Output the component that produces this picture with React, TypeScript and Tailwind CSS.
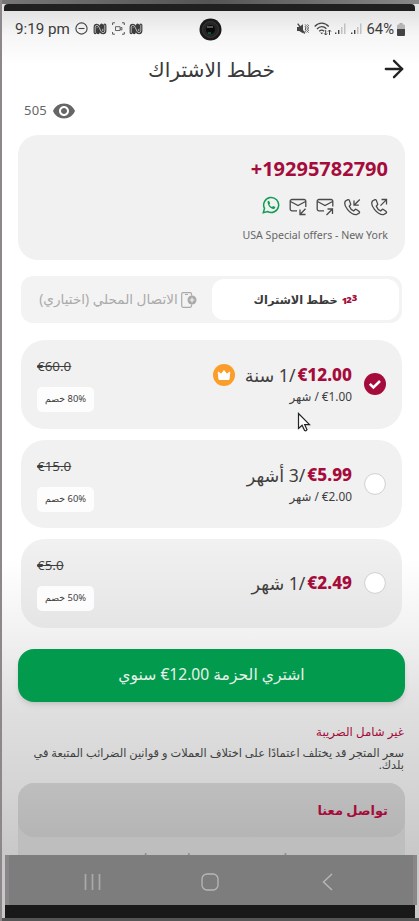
import { FiArrowRight } from 'react-icons/fi'
import { MdRemoveRedEye } from 'react-icons/md'

const plans = [
  { price: '€12.00', period: '/1 سنة', monthly: '€1.00', old: '€60.0', off: '80% خصم', selected: true },
  { price: '€5.99', period: '/3 أشهر', monthly: '€2.00', old: '€15.0', off: '60% خصم', selected: false },
  { price: '€2.49', period: '/1 شهر', monthly: '', old: '€5.0', off: '50% خصم', selected: false },
]

const NIcon = () => (
  <svg width="14" height="12" viewBox="0 0 14 12" fill="none" strokeLinecap="round" strokeLinejoin="round">
    <path d="M2.2 9.6V4.2q0-1.8 1.6-1.8t2.2 1.7l1.9 4q.6 1.5 2.2 1.5t1.7-1.8V2.2M5.2 9.6V6M8.6 2.2v3" stroke="#3c3c3c" strokeWidth="3.2" />
    <path d="M2.2 9.6V4.2q0-1.8 1.6-1.8t2.2 1.7l1.9 4q.6 1.5 2.2 1.5t1.7-1.8V2.2" stroke="#ececec" strokeWidth=".7" />
  </svg>
)

const Signal = () => (
  <svg width="12" height="12" viewBox="0 0 12 12">
    <path d="M0 9.5h1.4V11H0zM3 7h1.4v4H3z" fill="#444" />
    <path d="M6 4h1.5v7H6zM9 0.5h1.5V11H9z" fill="#c2c2c2" />
  </svg>
)

const StatusBar = () => (
  <div className="flex h-[36px] shrink-0 items-center pl-[15px] pr-[14px] font-['Roboto',sans-serif] text-[#3c3c3c]">
    <div className="flex w-[184px] items-center">
      <span className="w-[60px] whitespace-nowrap text-[15.2px]">9:19 pm</span>
      <svg width="13" height="13" viewBox="0 0 13 13" fill="none" stroke="#444" strokeWidth="1.1">
        <circle cx="6.5" cy="6.5" r="5.6" />
        <path d="M3.5 6.5h6" />
      </svg>
      <span className="ml-[5px]"><NIcon /></span>
      <svg className="ml-[5px]" width="13" height="13" viewBox="0 0 13 13" fill="none" stroke="#555">
        <path d="M.6 3V.8h2.3M10 .8h2.3V3M.6 10v2.2h2.3M10 12.2h2.3V10" />
        <path d="M3.5 4.7h4.6v3.8H3.5zM8.1 6.3l1.8-1v2.8l-1.8-1" strokeWidth=".9" />
      </svg>
      <span className="ml-[4px]"><NIcon /></span>
    </div>
    <svg width="23" height="23" viewBox="0 0 23 23">
      <circle cx="11.5" cy="11.5" r="11" fill="#191919" />
      <circle cx="11.5" cy="11.5" r="8" fill="#252525" stroke="#393939" />
      <circle cx="11.5" cy="11.5" r="4.5" fill="#090909" />
      <path d="M8 9h6" stroke="#777" strokeWidth="1.4" />
      <path d="M9 15h3" stroke="#16795b" strokeWidth="1.2" />
    </svg>
    <div className="ml-auto flex items-center">
      <svg width="12" height="12" viewBox="0 0 12 12" fill="none" stroke="#444">
        <path d="M0 4h2.2L6 1.2v9L2.2 8H0z" fill="#444" stroke="none" />
        <path d="m.7.7 7 9.8" stroke="#444" strokeWidth="1.3" />
        <path d="m8.2 1.5 1 1-1 1.2 1 1.2-1 1.2 1 1.2-1 1.2 1 1M10.5 1.5l1 1-1 1.2 1 1.2-1 1.2 1 1.2-1 1.2 1 1" />
      </svg>
      <svg className="ml-[5px]" width="18" height="14" viewBox="0 0 18 14" fill="none" stroke="#444" strokeWidth="1.3">
        <path d="M.7 4.5c4-4.4 10-4.4 14 0M3 7c2.9-3 6.6-3 9.4-.2M5.2 9.3c1.6-1.5 3.5-1.5 5 0" />
        <path d="m6.2 10.5 1.5 1.7 1.5-1.5z" fill="#444" stroke="none" />
        <path d="M11.7 8v5m-1.5-1.6 1.5 1.6 1.4-1.6M15.5 13V8M14 9.6 15.5 8 17 9.6" strokeWidth="1" />
      </svg>
      <span className="ml-[3px]"><Signal /></span>
      <span className="ml-[4px]"><Signal /></span>
      <span className="ml-[4px] text-[14.8px]">64%</span>
      <svg className="ml-[3px]" width="8" height="13" viewBox="0 0 8 13">
        <rect x="2.3" width="3.5" height="3" rx="1" fill="#aaa" />
        <rect y="1.4" width="8" height="11.5" rx="1.2" fill="#b5b5b5" />
        <path d="M0 6h8v5.7q0 1.2-1.2 1.2H1.2Q0 12.9 0 11.7z" fill="#444" />
      </svg>
    </div>
  </div>
)

const Channels = () => (
  <div className="flex h-[20px] items-center gap-[9px]">
    <svg width="18" height="18" viewBox="0 0 18 18" fill="none" stroke="#119d55" strokeWidth="1.5" className="mb-[5px]">
      <path d="M1.3 16.7 2.5 12.4A7.5 7.5 0 1 1 5.5 15.5z" />
      <path d="M5.6 5.2 7 4.7l1.2 2.5-.8 1.2c.6 1.2 1.4 2 2.6 2.5l1.2-1 2.2 1.2c-.1 1.5-1.3 2-2.5 1.8C8 12.2 5.2 8.8 5.6 5.2z" fill="#119d55" stroke="none" />
    </svg>
    <svg width="18" height="18" viewBox="0 0 18 18" fill="none" stroke="#4a4a4a" strokeWidth="1.3">
      <path d="M8 12.8H3A1.7 1.7 0 0 1 1.2 11.1V3.2A1.7 1.7 0 0 1 3 1.5h12a1.7 1.7 0 0 1 1.8 1.7V9M1.5 3.5 9 7.6l7.5-4.1M16.5 10.7 11 16.5M11 11.5v5h5.5" />
    </svg>
    <svg width="18" height="18" viewBox="0 0 18 18" fill="none" stroke="#4a4a4a" strokeWidth="1.3">
      <path d="M8 12.8H3A1.7 1.7 0 0 1 1.2 11.1V3.2A1.7 1.7 0 0 1 3 1.5h12a1.7 1.7 0 0 1 1.8 1.7v5.3M1.5 3.5 9 7.6l7.5-4.1M10.5 17l6-6M11.5 11h5v5" />
    </svg>
    <svg width="18" height="18" viewBox="0 0 18 18" fill="none" stroke="#4a4a4a" strokeWidth="1.3">
      <path d="M5 1.7 2.5 3C-.4 7 7 17 13.4 16.7l2.7-1.6q.8-.7.1-1.5l-2.8-2.1q-.8-.5-1.5.2l-1.2 1.2c-2-.8-3.6-2.5-4.4-4.7l1-1.2q.6-.6.2-1.4L6.3 2.2Q5.8 1.3 5 1.7zM16.8 1.5 11 7.2M11 2.5v4.7h4.8" />
    </svg>
    <svg width="18" height="18" viewBox="0 0 18 18" fill="none" stroke="#4a4a4a" strokeWidth="1.3">
      <path d="M5 1.7 2.5 3C-.4 7 7 17 13.4 16.7l2.7-1.6q.8-.7.1-1.5l-2.8-2.1q-.8-.5-1.5.2l-1.2 1.2c-2-.8-3.6-2.5-4.4-4.7l1-1.2q.6-.6.2-1.4L6.3 2.2Q5.8 1.3 5 1.7zM10.5 7.6l6-6M11.5 1.5h5v5" />
    </svg>
  </div>
)

const Tabs = () => (
  <div className="ml-[21px] mr-[17px] mt-4 flex h-[47px] shrink-0 items-center rounded-[12px] bg-[#f3f3f3] p-[3px]">
    <div className="flex h-full w-[188px] items-center justify-center gap-[3px] text-[#aaa]">
      <span dir="rtl" className="whitespace-nowrap text-[13.6px]">الاتصال المحلي (اختياري)</span>
      <svg width="16" height="16" viewBox="0 0 16 16" fill="none" stroke="#aaa" strokeWidth="1.2">
        <path d="M10.5 3.5V2A1.4 1.4 0 0 0 9.2.7H2A1.4 1.4 0 0 0 .7 2v12A1.4 1.4 0 0 0 2 15.3h7.2a1.4 1.4 0 0 0 1.3-1.3v-1.5M4 2.5h3" />
        <circle cx="11" cy="8" r="4.5" fill="#aaa" stroke="none" />
        <path d="M11 5.7v4.6M8.7 8h4.6" stroke="#f3f3f3" />
      </svg>
    </div>
    <div className="flex h-[41px] flex-1 items-center justify-center gap-[4px] rounded-[12px] bg-white">
      <span dir="rtl" className="whitespace-nowrap text-[11.4px] font-bold text-[#3a3a3a]">خطط الاشتراك</span>
      <span className="flex text-[9.5px] font-black leading-none text-[#a50c3b]">
        <span className="mt-[2px] -mr-[1px]">1</span>
        <span className="mt-[1px]">2</span>
        <span className="-mt-[1px]">3</span>
      </span>
    </div>
  </div>
)

const PlanCard = ({ plan, className }: { plan: (typeof plans)[number]; className: string }) => (
  <div className={`ml-[21px] mr-[17px] flex h-[88.5px] shrink-0 justify-between rounded-[24px] pl-4 pr-[16px] text-[#3f3f3f] ${className}`}>
    <div className="flex flex-col items-start pt-[17px]">
      <span className="h-[18px] text-[13.4px] leading-[18px] line-through">{plan.old}</span>
      <span dir="rtl" className="mt-[12px] flex h-[25px] w-[57px] items-center justify-center whitespace-nowrap rounded-[5px] bg-white/85 text-[9.4px]">
        {plan.off}
      </span>
    </div>
    <div className="flex items-center gap-[12px]">
      <div className="flex flex-col items-end pb-px">
        <div className="flex h-[26px] items-center">
          {plan.selected && (
            <svg className="mr-[10px]" width="22" height="22" viewBox="0 0 22 22">
              <circle cx="11" cy="11" r="11" fill="#fb9d2b" />
              <path d="m5.2 8 3 2.2L11 6.5l2.8 3.7 3-2.2-.8 7.5H6z" fill="#fff" stroke="#fff" strokeLinejoin="round" />
            </svg>
          )}
          <span dir="rtl" className="whitespace-nowrap text-[17.6px]">{plan.period}</span>
          <span className="ml-[2px] text-[17.2px] font-extrabold text-[#a50c3b]">{plan.price}</span>
        </div>
        {plan.monthly && (
          <span dir="rtl" className="h-[17px] whitespace-nowrap text-[11.8px] leading-[17px]">
            <bdi dir="ltr">{plan.monthly}</bdi> / شهر
          </span>
        )}
      </div>
      <svg width="22" height="22" viewBox="0 0 22 22" fill="none">
        <circle cx="11" cy="11" r={plan.selected ? 11 : 10.4} fill={plan.selected ? '#a50c3b' : '#fff'} stroke={plan.selected ? 'none' : '#d0d0d0'} />
        {plan.selected && <path d="m5.8 10.8 3.6 3.6 6.6-6.4" stroke="#fff" strokeWidth="2.6" />}
      </svg>
    </div>
  </div>
)

const NavBar = () => (
  <div className="mr-[2px] ml-[5px] flex h-[50px] shrink-0 items-center border-x-[4px] border-[#898589] bg-[#7d7d7d]">
    <svg className="ml-[74px] mt-1" width="20" height="18" viewBox="0 0 20 18" stroke="#aaa" strokeWidth="1.7">
      <path d="M2.5 1v16M9.5 1v16M16.5 1v16" />
    </svg>
    <svg className="ml-[98px] mt-1" width="18" height="18" viewBox="0 0 18 18" fill="none" stroke="#b8b8b8" strokeWidth="1.3">
      <rect x="1" y="1" width="16" height="16" rx="5" />
    </svg>
    <svg className="ml-[103px] mt-1" width="12" height="18" viewBox="0 0 12 18" fill="none" stroke="#b8b8b8" strokeWidth="1.4">
      <path d="m10 1-8.5 8 8.5 8" />
    </svg>
  </div>
)

export default function App() {
  return (
    <div className="relative flex h-[921px] w-[419px] flex-col overflow-hidden bg-[linear-gradient(180deg,#e3e3e3_0,#e3e3e3_11px,#f6f6f6_35px,#fff_65px,#fff_560px,#f1f1f1_635px,#dfdfdf_710px,#d4d4d4_790px,#c8c8c8_855px)] font-['Noto_Sans','DejaVu_Sans',sans-serif]">
      <div className="h-[4px] shrink-0 bg-gradient-to-r from-[#777] via-[#555] to-[#888]" />
      <div className="mx-[4px] h-[7px] shrink-0 rounded-t bg-[#202020]" />
      <StatusBar />
      <header className="flex h-[44px] shrink-0 items-center pr-[11px]">
        <h1 dir="rtl" className="ml-[148px] w-[127px] whitespace-nowrap text-[20.2px] text-[#3a3a3a]">خطط الاشتراك</h1>
        <FiArrowRight className="ml-auto h-[28px] w-[28px] text-[#222]" />
      </header>
      <div className="flex h-[44px] shrink-0 items-center gap-[5px] pb-[5px] pl-[24px] text-[13px] text-[#666]">
        <span className="tracking-[0.2px]">505</span>
        <MdRemoveRedEye className="h-[24px] w-[24px] text-[#666]" />
      </div>
      <section className="ml-[18px] mr-[14px] flex h-[125px] shrink-0 flex-col items-end rounded-[20px] bg-[#f1f1f1] pr-[17px] pt-[19px]">
        <p className="h-[30px] text-[20px] font-bold leading-[30px] text-[#a50c3b]">+19295782790</p>
        <div className="mt-[13px]"><Channels /></div>
        <p className="mt-[10px] text-[10.6px] leading-[16px] text-[#666]">USA Special offers - New York</p>
      </section>
      <Tabs />
      <div className="mt-[17px] flex flex-col gap-[11px]">
        <PlanCard plan={plans[0]} className="bg-[#f1f1f1]" />
        <PlanCard plan={plans[1]} className="bg-[#f1f1f1]" />
        <PlanCard plan={plans[2]} className="bg-gradient-to-b from-[#f1f1f1] to-[#e5e5e5]" />
      </div>
      <button dir="rtl" className="ml-[18px] mr-[14px] mt-[21px] h-[53px] shrink-0 rounded-[16px] bg-[#029b4e] text-[15.6px] text-[#e8f0e9] shadow-md">
        اشتري الحزمة <bdi dir="ltr">€12.00</bdi> سنوي
      </button>
      <div dir="rtl" className="h-[81px] shrink-0 px-[15px] pt-[20px] text-[#3f3f3f]">
        <p className="h-[18px] text-[11.8px] leading-[18px] text-[#a50c3b]">غير شامل الضريبة</p>
        <p className="mt-[7px] whitespace-nowrap text-[11.4px] leading-[12px]">
          سعر المتجر قد يختلف اعتمادًا على اختلاف العملات و قوانين الضرائب المتبعة في
          <br />
          بلدك.
        </p>
      </div>
      <section dir="rtl" className="ml-[18px] mr-[14px] h-[72.5px] shrink-0 overflow-hidden rounded-t-[16px] bg-[#bebebe]">
        <h2 className="h-[54px] rounded-[16px] bg-gradient-to-b from-[#bebebe] to-[#b5b5b5] pr-[17px] text-[13px] font-bold leading-[54px] text-[#a50c3b]">تواصل معنا</h2>
        <p className="mt-[14px] whitespace-nowrap pr-[10px] text-[11px] leading-[18px] text-[#666]">
          يمكنك التواصل معنا في أي وقت إذا كان لديك أي سؤال أو استفسار
        </p>
      </section>
      <NavBar />
      <div className="ml-[5px] mr-[4px] h-[13px] shrink-0 bg-[#191919]" />
      <div className="h-[3px] shrink-0 bg-[#555]" />
      <div className="absolute inset-y-0 left-0 w-[2px] bg-[#8d868a]" />
      <svg className="absolute left-[297px] top-[412px]" width="14" height="21" viewBox="0 0 14 21">
        <path d="M1.5 1.5v15l3.6-3.3 2.5 5.3q1.5.8 2.4-.8l-2.3-5h4.8z" fill="#fff" stroke="#222" strokeWidth="1.2" />
      </svg>
    </div>
  )
}
